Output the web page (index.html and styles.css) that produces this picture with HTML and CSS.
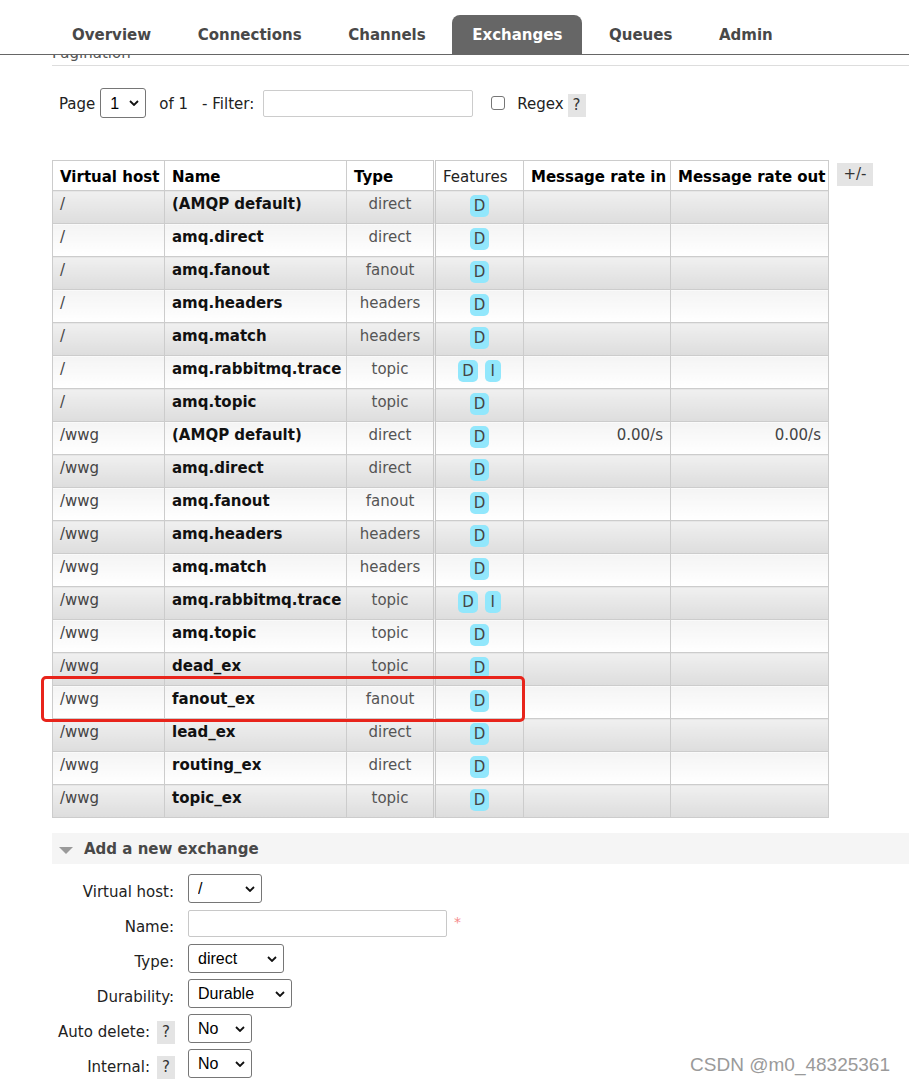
FILE: index.html
```html
<!DOCTYPE html>
<html lang="en">
<head>
<meta charset="utf-8">
<title>RabbitMQ Management - Exchanges</title>
<link rel="stylesheet" href="styles.css">
</head>
<body>
<header class="menu">
  <ul class="tabs">
    <li class="tab">Overview</li>
    <li class="tab">Connections</li>
    <li class="tab">Channels</li>
    <li class="tab active">Exchanges</li>
    <li class="tab">Queues</li>
    <li class="tab">Admin</li>
  </ul>
</header>

<main class="main">
  <h2 class="section-title">Pagination</h2>

  <div class="pager">
    <span class="pager-text gap-page">Page</span>
    <span class="select-box w-page gap-select">
      <select><option>1</option></select>
      <svg class="chevron" viewBox="0 0 10 6" width="10" height="6"><polyline points="1,1 5,5 9,1"/></svg>
    </span>
    <span class="pager-text gap-of">of 1</span>
    <span class="pager-text gap-filter">- Filter:</span>
    <input class="filter-input" type="text">
    <input class="check" type="checkbox">
    <span class="pager-text regex">Regex</span>
    <span class="help help-pager">?</span>
  </div>

  <div class="table-wrap">
    <table class="list">
      <colgroup>
        <col class="c-vhost"><col class="c-name"><col class="c-type">
        <col class="c-feat"><col class="c-rate-in"><col class="c-rate-out">
      </colgroup>
      <thead>
        <tr>
          <th>Virtual host</th>
          <th>Name</th>
          <th>Type</th>
          <th class="feat-col feat-head">Features</th>
          <th>Message rate in</th>
          <th>Message rate out</th>
        </tr>
      </thead>
      <tbody>
        <tr class="alt1"><td class="vhost">/</td><td class="name">(AMQP default)</td><td class="type">direct</td><td class="feat-col"><div class="feats"><span class="badge">D</span></div></td><td class="rate"></td><td class="rate"></td></tr>
        <tr class="alt2"><td class="vhost">/</td><td class="name">amq.direct</td><td class="type">direct</td><td class="feat-col"><div class="feats"><span class="badge">D</span></div></td><td class="rate"></td><td class="rate"></td></tr>
        <tr class="alt1"><td class="vhost">/</td><td class="name">amq.fanout</td><td class="type">fanout</td><td class="feat-col"><div class="feats"><span class="badge">D</span></div></td><td class="rate"></td><td class="rate"></td></tr>
        <tr class="alt2"><td class="vhost">/</td><td class="name">amq.headers</td><td class="type">headers</td><td class="feat-col"><div class="feats"><span class="badge">D</span></div></td><td class="rate"></td><td class="rate"></td></tr>
        <tr class="alt1"><td class="vhost">/</td><td class="name">amq.match</td><td class="type">headers</td><td class="feat-col"><div class="feats"><span class="badge">D</span></div></td><td class="rate"></td><td class="rate"></td></tr>
        <tr class="alt2"><td class="vhost">/</td><td class="name">amq.rabbitmq.trace</td><td class="type">topic</td><td class="feat-col"><div class="feats"><span class="badge">D</span><span class="badge">I</span></div></td><td class="rate"></td><td class="rate"></td></tr>
        <tr class="alt1"><td class="vhost">/</td><td class="name">amq.topic</td><td class="type">topic</td><td class="feat-col"><div class="feats"><span class="badge">D</span></div></td><td class="rate"></td><td class="rate"></td></tr>
        <tr class="alt2"><td class="vhost">/wwg</td><td class="name">(AMQP default)</td><td class="type">direct</td><td class="feat-col"><div class="feats"><span class="badge">D</span></div></td><td class="rate">0.00/s</td><td class="rate">0.00/s</td></tr>
        <tr class="alt1"><td class="vhost">/wwg</td><td class="name">amq.direct</td><td class="type">direct</td><td class="feat-col"><div class="feats"><span class="badge">D</span></div></td><td class="rate"></td><td class="rate"></td></tr>
        <tr class="alt2"><td class="vhost">/wwg</td><td class="name">amq.fanout</td><td class="type">fanout</td><td class="feat-col"><div class="feats"><span class="badge">D</span></div></td><td class="rate"></td><td class="rate"></td></tr>
        <tr class="alt1"><td class="vhost">/wwg</td><td class="name">amq.headers</td><td class="type">headers</td><td class="feat-col"><div class="feats"><span class="badge">D</span></div></td><td class="rate"></td><td class="rate"></td></tr>
        <tr class="alt2"><td class="vhost">/wwg</td><td class="name">amq.match</td><td class="type">headers</td><td class="feat-col"><div class="feats"><span class="badge">D</span></div></td><td class="rate"></td><td class="rate"></td></tr>
        <tr class="alt1"><td class="vhost">/wwg</td><td class="name">amq.rabbitmq.trace</td><td class="type">topic</td><td class="feat-col"><div class="feats"><span class="badge">D</span><span class="badge">I</span></div></td><td class="rate"></td><td class="rate"></td></tr>
        <tr class="alt2"><td class="vhost">/wwg</td><td class="name">amq.topic</td><td class="type">topic</td><td class="feat-col"><div class="feats"><span class="badge">D</span></div></td><td class="rate"></td><td class="rate"></td></tr>
        <tr class="alt1"><td class="vhost">/wwg</td><td class="name">dead_ex</td><td class="type">topic</td><td class="feat-col"><div class="feats"><span class="badge">D</span></div></td><td class="rate"></td><td class="rate"></td></tr>
        <tr class="alt2"><td class="vhost">/wwg</td><td class="name">fanout_ex</td><td class="type">fanout</td><td class="feat-col"><div class="feats"><span class="badge">D</span></div></td><td class="rate"></td><td class="rate"></td></tr>
        <tr class="alt1"><td class="vhost">/wwg</td><td class="name">lead_ex</td><td class="type">direct</td><td class="feat-col"><div class="feats"><span class="badge">D</span></div></td><td class="rate"></td><td class="rate"></td></tr>
        <tr class="alt2"><td class="vhost">/wwg</td><td class="name">routing_ex</td><td class="type">direct</td><td class="feat-col"><div class="feats"><span class="badge">D</span></div></td><td class="rate"></td><td class="rate"></td></tr>
        <tr class="alt1"><td class="vhost">/wwg</td><td class="name">topic_ex</td><td class="type">topic</td><td class="feat-col"><div class="feats"><span class="badge">D</span></div></td><td class="rate"></td><td class="rate"></td></tr>
      </tbody>
    </table>
    <span class="toggle">+/-</span>
    <div class="highlight"></div>
  </div>

  <div class="section-bar"><span class="triangle"></span>Add a new exchange</div>

  <form class="form">
    <div class="form-row">
      <div class="form-label"><span class="label-text">Virtual host:</span></div>
      <span class="select-box w-vhost">
        <select><option>/</option><option>/wwg</option></select>
        <svg class="chevron" viewBox="0 0 10 6" width="10" height="6"><polyline points="1,1 5,5 9,1"/></svg>
      </span>
    </div>
    <div class="form-row">
      <div class="form-label"><span class="label-text">Name:</span></div>
      <input class="name-input" type="text">
      <span class="required">*</span>
    </div>
    <div class="form-row">
      <div class="form-label"><span class="label-text">Type:</span></div>
      <span class="select-box w-type">
        <select><option>direct</option><option>fanout</option><option>headers</option><option>topic</option></select>
        <svg class="chevron" viewBox="0 0 10 6" width="10" height="6"><polyline points="1,1 5,5 9,1"/></svg>
      </span>
    </div>
    <div class="form-row">
      <div class="form-label"><span class="label-text">Durability:</span></div>
      <span class="select-box w-durable">
        <select><option>Durable</option><option>Transient</option></select>
        <svg class="chevron" viewBox="0 0 10 6" width="10" height="6"><polyline points="1,1 5,5 9,1"/></svg>
      </span>
    </div>
    <div class="form-row">
      <div class="form-label"><span class="label-text">Auto delete:</span><span class="help help-form">?</span></div>
      <span class="select-box w-bool">
        <select><option>No</option><option>Yes</option></select>
        <svg class="chevron" viewBox="0 0 10 6" width="10" height="6"><polyline points="1,1 5,5 9,1"/></svg>
      </span>
    </div>
    <div class="form-row">
      <div class="form-label"><span class="label-text">Internal:</span><span class="help help-form">?</span></div>
      <span class="select-box w-bool">
        <select><option>No</option><option>Yes</option></select>
        <svg class="chevron" viewBox="0 0 10 6" width="10" height="6"><polyline points="1,1 5,5 9,1"/></svg>
      </span>
    </div>
  </form>
</main>

<div class="watermark">CSDN @m0_48325361</div>
</body>
</html>
```

FILE: styles.css
```css
* {
  box-sizing: border-box;
}

html,
body {
  margin: 0;
  padding: 0;
}

body {
  position: relative;
  width: 909px;
  height: 1084px;
  overflow: hidden;
  background: #fff;
  color: #222;
  font-family: "DejaVu Sans", Verdana, sans-serif;
  font-size: 15px;
}

.menu {
  position: fixed;
  top: 0;
  left: 0;
  right: 0;
  height: 55px;
  background: #fff;
  border-bottom: 1px solid #666;
  z-index: 5;
}

.tabs {
  display: flex;
  margin: 0;
  padding: 15px 0 0 52px;
  list-style: none;
}

.tab {
  height: 39px;
  margin-right: 6.6px;
  padding: 1px 20px 0;
  line-height: 38px;
  font-weight: bold;
  color: #484848;
  border-radius: 8px 8px 0 0;
}

.tab.active {
  background: #666;
  color: #fff;
}

/* ---- main content ---- */
.main {
  padding: 43px 0 0 52px;
}

.section-title {
  margin: 0;
  padding-bottom: 2px;
  border-bottom: 1px solid #ddd;
  font-size: 15px;
  font-weight: normal;
  line-height: 20px;
  color: #555;
}

/* pagination / filter row */
.pager {
  display: flex;
  align-items: center;
  height: 30px;
  margin-top: 22px;
  padding-left: 7px;
}

.pager-text {
  padding-top: 3px;
  line-height: 19px;
  white-space: nowrap;
}

.gap-page { margin-right: 5px; }
.gap-select { margin-right: 13px; }
.gap-of { margin-right: 14px; }
.gap-filter { margin-right: 9px; }

.filter-input {
  width: 210px;
  height: 27px;
  margin: 0;
  border: 1px solid #ccc;
  border-radius: 2px;
  background: #fff;
}

.check {
  appearance: none;
  width: 14px;
  height: 14px;
  margin: 0 0 0 18px;
  border: 1px solid #767676;
  border-radius: 3px;
  background: #fff;
}

.regex {
  margin-left: 12px;
}

.help {
  display: inline-block;
  width: 18px;
  height: 23px;
  background: #e4e4e4;
  color: #333;
  text-align: center;
  line-height: 23px;
}

.help-pager {
  margin: 5px 0 0 4px;
}

/* select controls */
.select-box {
  position: relative;
  display: inline-block;
  height: 29px;
}

.select-box select {
  appearance: none;
  -webkit-appearance: none;
  width: 100%;
  height: 100%;
  margin: 0;
  padding: 0 0 0 9px;
  border: 1px solid #767676;
  border-radius: 3px;
  background: #fff;
  color: #000;
  font-family: "Liberation Sans", Arial, sans-serif;
  font-size: 16px;
}

.chevron {
  position: absolute;
  top: 50%;
  right: 7px;
  margin-top: -3px;
  fill: none;
  stroke: #111;
  stroke-width: 1.8;
  pointer-events: none;
}

.w-page { width: 46px; height: 30px; }
.w-vhost { width: 74px; }
.w-type { width: 96px; }
.w-durable { width: 104px; }
.w-bool { width: 64px; }

/* ---- exchanges table ---- */
.table-wrap {
  position: relative;
  display: flex;
  align-items: flex-start;
  margin-top: 42px;
}

.list {
  width: 776px;
  border-collapse: collapse;
  table-layout: fixed;
}

.c-vhost { width: 112px; }
.c-name { width: 182px; }
.c-type { width: 88px; }
.c-feat { width: 89px; }
.c-rate-in { width: 147px; }
.c-rate-out { width: 158px; }

.list th,
.list td {
  padding: 0 7px;
  border: 1px solid #ccc;
  vertical-align: top;
  white-space: nowrap;
  line-height: 19px;
}

.list thead tr {
  height: 30px;
}

.list th {
  padding-top: 7px;
  background: #fff;
  color: #000;
  font-weight: bold;
  text-align: left;
}

.list th.feat-head {
  font-weight: normal;
  color: #222;
}

.list .feat-col {
  border-left: 3px double #c8c8c8;
}

.list tbody tr {
  height: 33px;
}

.list td {
  padding-top: 4px;
}

.list tr.alt1 td {
  background: linear-gradient(#f0f0f0, #dddddd);
}

.list tr.alt2 td {
  background: linear-gradient(#f4f4f4, #ffffff);
}

.vhost {
  color: #444;
}

.name {
  font-weight: bold;
  color: #111;
  overflow: visible;
}

.type {
  text-align: center;
  color: #555;
}

.rate {
  text-align: right;
  color: #444;
}

.feats {
  display: flex;
  justify-content: center;
  gap: 7px;
}

.badge {
  display: inline-block;
  min-width: 16px;
  height: 22px;
  padding: 0 4px;
  border-radius: 5px;
  background: #92e7fc;
  color: #444;
  line-height: 22px;
  text-align: center;
}

.toggle {
  margin: 3px 0 0 8px;
  width: 36px;
  height: 23px;
  background: #e4e4e4;
  color: #333;
  font-size: 15px;
  line-height: 23px;
  text-align: center;
}

/* red marker drawn over the fanout_ex row */
.highlight {
  position: absolute;
  top: 516px;
  left: -11px;
  width: 484px;
  height: 46px;
  border: 3px solid #e8241b;
  border-radius: 5px;
  pointer-events: none;
}

/* ---- add exchange section ---- */
.section-bar {
  display: flex;
  align-items: center;
  height: 31px;
  margin-top: 15px;
  padding-left: 7px;
  background: #f5f5f5;
  color: #484848;
  font-weight: bold;
}

.triangle {
  width: 0;
  height: 0;
  margin: 3px 11px 0 0;
  border-left: 7px solid transparent;
  border-right: 7px solid transparent;
  border-top: 7px solid #9a9a9a;
}

.form {
  display: flex;
  flex-direction: column;
  gap: 6px;
  margin: 10px 0 0;
}

.form-row {
  display: flex;
  align-items: flex-start;
  height: 29px;
}

.form-label {
  display: flex;
  justify-content: flex-end;
  align-items: flex-start;
  width: 122px;
  margin-right: 14px;
}

.label-text {
  padding-top: 9px;
  line-height: 19px;
  color: #222;
  white-space: nowrap;
}

.help-form {
  margin: 7px -1px 0 7px;
}

.name-input {
  width: 259px;
  height: 27px;
  margin: 1px 0 0;
  border: 1px solid #c8c8c8;
  border-radius: 2px;
  background: #fff;
}

.required {
  margin: 5px 0 0 7px;
  color: #f58a8a;
  font-size: 14px;
}

/* ---- site watermark ---- */
.watermark {
  position: absolute;
  top: 1054px;
  right: 19px;
  font-family: "Liberation Sans", Arial, sans-serif;
  font-size: 19px;
  line-height: 22px;
  color: #9a9a9a;
  text-shadow: 0 0 1px #fff;
  white-space: nowrap;
}
```
